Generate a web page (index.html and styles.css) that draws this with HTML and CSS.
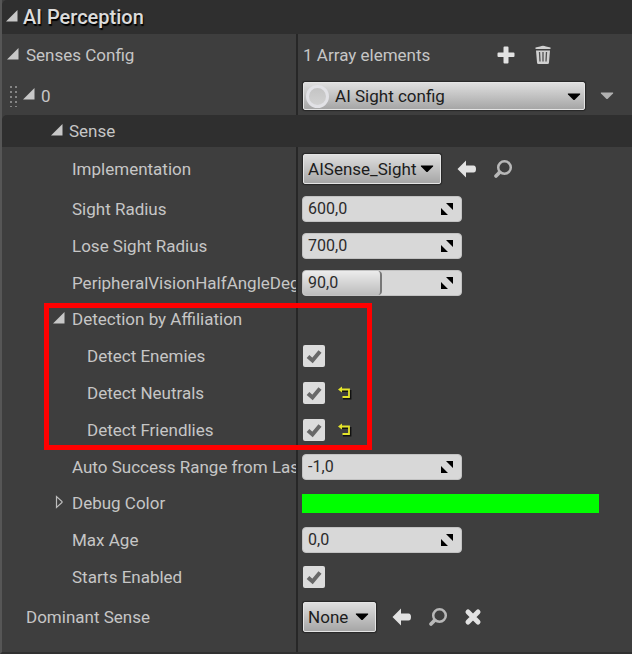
FILE: index.html
```html
<!DOCTYPE html>
<html lang="en">
<head>
<meta charset="utf-8">
<title>AI Perception</title>
<link rel="stylesheet" href="styles.css">
</head>
<body>
<svg class="defs" aria-hidden="true">
  <symbol id="open" viewBox="0 0 12 12"><path d="M11.500 0V11.500H0Z" fill="#c8c8c8"/></symbol>
  <symbol id="closed" viewBox="0 0 12 14"><path d="M3.500 1.500V12.500L9 7.500V6.500Z" fill="none" stroke="#bdbdbd" stroke-width="1.200"/></symbol>
  <symbol id="down" viewBox="0 0 14 8"><path d="M1 .5H13Q13.500 1 13 1.500L7.500 7H6.500L1 1.500Q.5 1 1 .5Z" fill="currentColor"/></symbol>
  <symbol id="plus" viewBox="0 0 18 18"><path d="M6.500 1.500Q6.500.5 7.500.5H10.500Q11.500.5 11.500 1.500V6.500H16.500Q17.500 6.500 17.500 7.500V10Q17.500 11 16.500 11H11.500V16.500Q11.500 17.500 10.500 17.500H7.500Q6.500 17.500 6.500 16.500V11H1.500Q.5 11 .5 10V7.500Q.5 6.500 1.500 6.500H6.500Z" fill="#e2e2e2"/></symbol>
  <symbol id="trash" viewBox="0 0 18 20"><path d="M1.500 4V2.500L6 1.500Q9 0 12 1.500L16.500 2.500V4Z" fill="#d0d0d0"/><path d="M2 5.500H16L15 17.500Q15 19 13.500 19H4.500Q3 19 3 17.500Z" fill="#d0d0d0"/><path d="M5.500 7L6 16.500M9 7V16.500M12.500 7L12 16.500" stroke="#505050" stroke-width="1.300"/></symbol>
  <symbol id="back" viewBox="0 0 20 18"><path d="M.5 9L9 .5V5.500H16.500Q19 5.500 19 9T16.500 12.500H9V17.500Z" fill="#e2e2e2"/></symbol>
  <symbol id="find" viewBox="0 0 20 20"><circle cx="11.500" cy="8.500" r="6.300" fill="none" stroke="#b8b8b8" stroke-width="2.500"/><path d="M6.500 13.500L3 17" stroke="#b8b8b8" stroke-width="3.800" stroke-linecap="round"/></symbol>
  <symbol id="clear" viewBox="0 0 18 18"><path d="M4 4L14 14M14 4L4 14" stroke="#e2e2e2" stroke-width="5" stroke-linecap="round"/></symbol>
  <symbol id="reset" viewBox="0 0 14 14"><path d="M4 5H12.500V12.500H5" fill="none" stroke="#111" stroke-width="1.800"/><path d="M2 3.500H11V11H4.500" fill="none" stroke="#e4e42a" stroke-width="1.800"/><path d="M0 3.500L4 .5V6.500Z" fill="#e4e42a"/></symbol>
  <symbol id="drag" viewBox="0 0 14 14"><path d="M6 1H13V8Z M1 6L8 13H1Z" fill="#000"/></symbol>
  <symbol id="check" viewBox="0 0 22 22"><path d="M5 11.500L9.500 15.500L17 6.500" fill="none" stroke="#686868" stroke-width="4"/></symbol>
</svg>

<main class="panel">
  <header class="bar title-bar">
    <button class="toggle" aria-label="Collapse AI Perception"><svg class="tri"><use href="#open"/></svg></button>
    <h1>AI Perception</h1>
  </header>

  <div class="row senses">
    <div class="name level-1"><button class="toggle" aria-label="Collapse Senses Config"><svg class="tri"><use href="#open"/></svg></button><span>Senses Config</span></div>
    <div class="value array"><span class="count">1 Array elements</span>
      <button class="icon" aria-label="Add element"><svg class="i18"><use href="#plus"/></svg></button>
      <button class="icon" aria-label="Delete all elements"><svg class="bin"><use href="#trash"/></svg></button></div>
  </div>

  <div class="row element">
    <div class="name level-0"><span class="grip"></span><button class="toggle" aria-label="Collapse element 0"><svg class="tri"><use href="#open"/></svg></button><label for="config">0</label></div>
    <div class="value config"><div class="combo wide"><span class="ring"></span><select id="config"><option>AI Sight config</option></select><svg class="down"><use href="#down"/></svg></div>
      <button class="icon more" aria-label="Element options"><svg class="down"><use href="#down"/></svg></button></div>
  </div>

  <div class="bar group-bar">
    <button class="toggle" aria-label="Collapse Sense"><svg class="tri"><use href="#open"/></svg></button><h2>Sense</h2>
  </div>

  <div class="row tall">
    <div class="name level-2"><label for="impl">Implementation</label></div>
    <div class="value picker"><div class="combo impl"><select id="impl"><option>AISense_Sight</option></select><svg class="down"><use href="#down"/></svg></div>
      <button class="icon" aria-label="Use selected"><svg class="arrow"><use href="#back"/></svg></button>
      <button class="icon" aria-label="Browse"><svg class="i20"><use href="#find"/></svg></button></div>
  </div>
  <div class="row">
    <div class="name level-2"><label for="sight">Sight Radius</label></div>
    <div class="value"><div class="spin"><input id="sight" type="text" value="600,0"><svg class="drag"><use href="#drag"/></svg></div></div>
  </div>
  <div class="row">
    <div class="name level-2"><label for="lose">Lose Sight Radius</label></div>
    <div class="value"><div class="spin"><input id="lose" type="text" value="700,0"><svg class="drag"><use href="#drag"/></svg></div></div>
  </div>
  <div class="row">
    <div class="name level-2"><label for="angle">PeripheralVisionHalfAngleDegrees</label></div>
    <div class="value"><div class="spin"><span class="fill" style="width:50%"></span><input id="angle" type="text" value="90,0"><svg class="drag"><use href="#drag"/></svg></div></div>
  </div>

  <section class="affiliation">
    <div class="row short">
      <div class="name level-2"><button class="toggle" aria-label="Collapse Detection by Affiliation"><svg class="tri"><use href="#open"/></svg></button><span>Detection by Affiliation</span></div>
      <div class="value"></div>
    </div>
    <div class="row">
      <div class="name level-3"><label for="enemies">Detect Enemies</label></div>
      <div class="value"><span class="tick"><input id="enemies" type="checkbox" checked><svg><use href="#check"/></svg></span></div>
    </div>
    <div class="row">
      <div class="name level-3"><label for="neutrals">Detect Neutrals</label></div>
      <div class="value"><span class="tick"><input id="neutrals" type="checkbox" checked><svg><use href="#check"/></svg></span><button class="icon" aria-label="Reset Detect Neutrals"><svg class="reset"><use href="#reset"/></svg></button></div>
    </div>
    <div class="row">
      <div class="name level-3"><label for="friendlies">Detect Friendlies</label></div>
      <div class="value"><span class="tick"><input id="friendlies" type="checkbox" checked><svg><use href="#check"/></svg></span><button class="icon" aria-label="Reset Detect Friendlies"><svg class="reset"><use href="#reset"/></svg></button></div>
    </div>
    <div class="outline"></div>
  </section>

  <div class="row">
    <div class="name level-2"><label for="auto">Auto Success Range from Last Seen Location</label></div>
    <div class="value"><div class="spin"><input id="auto" type="text" value="-1,0"><svg class="drag"><use href="#drag"/></svg></div></div>
  </div>
  <div class="row short">
    <div class="name level-2"><button class="toggle" aria-label="Expand Debug Color"><svg class="tri-closed"><use href="#closed"/></svg></button><span>Debug Color</span></div>
    <div class="value"><button class="swatch" aria-label="Debug Color"></button></div>
  </div>
  <div class="row">
    <div class="name level-2"><label for="age">Max Age</label></div>
    <div class="value"><div class="spin"><input id="age" type="text" value="0,0"><svg class="drag"><use href="#drag"/></svg></div></div>
  </div>
  <div class="row">
    <div class="name level-2"><label for="starts">Starts Enabled</label></div>
    <div class="value"><span class="tick"><input id="starts" type="checkbox" checked><svg><use href="#check"/></svg></span></div>
  </div>
  <div class="row tall">
    <div class="name level-1"><label for="dominant">Dominant Sense</label></div>
    <div class="value picker"><div class="combo none"><select id="dominant"><option>None</option></select><svg class="down"><use href="#down"/></svg></div>
      <button class="icon" aria-label="Use selected"><svg class="arrow"><use href="#back"/></svg></button>
      <button class="icon" aria-label="Browse"><svg class="i20"><use href="#find"/></svg></button>
      <button class="icon" aria-label="Clear"><svg class="i18"><use href="#clear"/></svg></button></div>
  </div>
  <div class="row rest"><div class="name"></div><div class="value"></div></div>
</main>
</body>
</html>
```
FILE: styles.css
```css
* { box-sizing: border-box; }

body {
  margin: 0;
  background: #3e3e3e;
  color: #c6c6c6;
  font: 17px/20px Roboto, "Liberation Sans", sans-serif;
}

svg { display: block; }
.defs { position: absolute; width: 0; height: 0; }

button {
  display: block;
  padding: 0;
  border: 0;
  background: none;
  color: inherit;
  font: inherit;
}

.panel {
  display: flex;
  flex-direction: column;
  min-height: 100vh;
  border-left: 2px solid #565656;
  border-bottom: 2px solid #303030;
}

.bar {
  display: flex;
  align-items: center;
  background: #2f2f2f;
  border-top-left-radius: 5px;
}

.title-bar { height: 34px; padding-left: 4px; gap: 5px; }
.group-bar { height: 32px; padding-left: 49px; gap: 6px; }

h1, h2 { margin: 0; font-size: 17px; font-weight: 400; }
h1 {
  font-size: 20px;
  font-weight: 500;
  color: #dcdcdc;
  text-shadow: 1px 2px 1px #000;
}

.row {
  display: grid;
  grid-template-columns: 47% 1fr;
  height: 37px;
}
.short { height: 36px; }
.tall { height: 43px; }
.senses { height: 42px; }
.element { height: 39px; }
.rest { flex: 1; height: auto; }

.name {
  display: flex;
  align-items: center;
  overflow: hidden;
  border-right: 2px solid #272727;
  white-space: nowrap;
}
.level-0 { padding-left: 7px; gap: 6px; }
.level-1 { padding-left: 24px; }
.level-2 { padding-left: 70px; }
.level-3 { padding-left: 85px; }

.toggle { flex: none; padding-bottom: 3px; }
.level-1 .toggle,
.level-2 .toggle { margin-left: -19px; margin-right: 7px; }
.tri { width: 12px; height: 12px; }
.tri-closed { width: 12px; height: 14px; }

.grip {
  width: 8px;
  height: 22px;
  background: radial-gradient(circle at 2px 2px, #858585 1px, transparent 1px) 0 0 / 5px 5px;
}

.value {
  display: flex;
  align-items: center;
  min-width: 0;
  padding-left: 4px;
}

.icon { flex: none; color: #b0b0b0; }
.i18 { width: 18px; height: 18px; }
.i20 { width: 20px; height: 20px; }
.arrow { width: 20px; height: 18px; }
.bin { width: 18px; height: 20px; }
.reset { width: 14px; height: 14px; }
.down { width: 14px; height: 8px; }

.count { flex: none; width: 175px; }
.array { gap: 19px; padding-left: 5px; }

.config { padding-left: 5px; padding-right: 18px; gap: 15px; }
.picker { padding-left: 5px; gap: 16px; }

.combo {
  position: relative;
  flex: none;
  height: 30px;
  color: #000;
  border: 1px solid #e4e4e4;
  border-radius: 2px;
  background: linear-gradient(#dedede, #a6a6a6);
  box-shadow: 0 0 1px 1px #262626;
}
.combo select {
  width: 100%;
  height: 100%;
  margin: 0;
  padding: 0 20px 0 4px;
  border: 0;
  background: none;
  color: #1c1c1c;
  font: inherit;
  appearance: none;
}
.combo .down {
  position: absolute;
  right: 6px;
  top: 10px;
  pointer-events: none;
}
.wide { flex: 1; height: 28px; }
.wide select { padding-left: 31px; }
.wide .down { right: 3px; }
.impl { width: 138px; }
.none { width: 73px; }

.ring {
  position: absolute;
  left: 2px;
  top: 2px;
  width: 23px;
  height: 23px;
  border: 3px solid #e2e2e6;
  border-radius: 50%;
  background: linear-gradient(#c4c4c4, #d2d2d2);
  pointer-events: none;
}

.spin {
  position: relative;
  width: 160px;
  height: 26px;
  overflow: hidden;
  border: 1px solid #c2c2c2;
  border-radius: 4px;
  background: #d8d8d8;
}
.spin input {
  position: relative;
  width: 100%;
  height: 100%;
  padding: 0 24px 0 5px;
  border: 0;
  background: none;
  color: #2b2b2b;
  font: inherit;
  font-size: 16px;
}
.drag {
  position: absolute;
  right: 7px;
  top: 5px;
  width: 14px;
  height: 14px;
}
.fill {
  position: absolute;
  inset: 0 auto 0 0;
  border-right: 2px solid #777;
  border-radius: 3px 4px 4px 3px;
  background: linear-gradient(#ececec, #bcbcbc);
}

.tick {
  position: relative;
  width: 22px;
  height: 22px;
  margin-left: 1px;
  margin-right: 13px;
}
.tick input {
  display: block;
  width: 22px;
  height: 22px;
  margin: 0;
  border-radius: 2px;
  background: #dcdcdc;
  appearance: none;
}
.tick svg {
  position: absolute;
  inset: 0;
  width: 22px;
  height: 22px;
  pointer-events: none;
}
.tick input:not(:checked) + svg { display: none; }

.swatch { width: 90%; height: 19px; background: #00ff00; }

.affiliation { position: relative; }
.outline {
  position: absolute;
  top: 2px;
  bottom: -2px;
  left: 42px;
  width: 52%;
  border: 5px solid #f00;
  pointer-events: none;
}
```
